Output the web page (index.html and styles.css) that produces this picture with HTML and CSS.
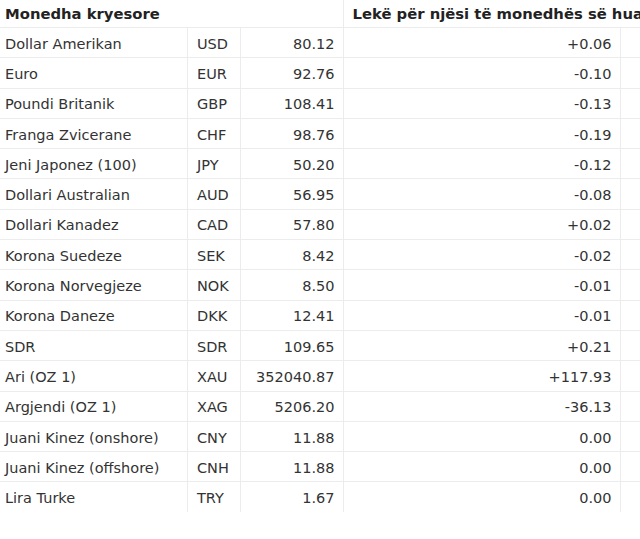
FILE: index.html
```html
<!DOCTYPE html>
<html lang="sq">
<head>
<meta charset="utf-8">
<title>Monedha kryesore</title>
<link rel="stylesheet" href="styles.css">
</head>
<body>
<table class="rates">
  <colgroup>
    <col class="c-name"><col class="c-code"><col class="c-val"><col class="c-chg"><col class="c-extra">
  </colgroup>
  <thead>
    <tr><th colspan="3">Monedha kryesore</th><th colspan="2" class="th-right">Lekë për njësi të monedhës së huaj</th></tr>
  </thead>
  <tbody>
    <tr><td>Dollar Amerikan</td><td>USD</td><td class="num">80.12</td><td class="num">+0.06</td><td></td></tr>
    <tr><td>Euro</td><td>EUR</td><td class="num">92.76</td><td class="num">-0.10</td><td></td></tr>
    <tr><td>Poundi Britanik</td><td>GBP</td><td class="num">108.41</td><td class="num">-0.13</td><td></td></tr>
    <tr><td>Franga Zvicerane</td><td>CHF</td><td class="num">98.76</td><td class="num">-0.19</td><td></td></tr>
    <tr><td>Jeni Japonez (100)</td><td>JPY</td><td class="num">50.20</td><td class="num">-0.12</td><td></td></tr>
    <tr><td>Dollari Australian</td><td>AUD</td><td class="num">56.95</td><td class="num">-0.08</td><td></td></tr>
    <tr><td>Dollari Kanadez</td><td>CAD</td><td class="num">57.80</td><td class="num">+0.02</td><td></td></tr>
    <tr><td>Korona Suedeze</td><td>SEK</td><td class="num">8.42</td><td class="num">-0.02</td><td></td></tr>
    <tr><td>Korona Norvegjeze</td><td>NOK</td><td class="num">8.50</td><td class="num">-0.01</td><td></td></tr>
    <tr><td>Korona Daneze</td><td>DKK</td><td class="num">12.41</td><td class="num">-0.01</td><td></td></tr>
    <tr><td>SDR</td><td>SDR</td><td class="num">109.65</td><td class="num">+0.21</td><td></td></tr>
    <tr><td>Ari (OZ 1)</td><td>XAU</td><td class="num">352040.87</td><td class="num">+117.93</td><td></td></tr>
    <tr><td>Argjendi (OZ 1)</td><td>XAG</td><td class="num">5206.20</td><td class="num">-36.13</td><td></td></tr>
    <tr><td>Juani Kinez (onshore)</td><td>CNY</td><td class="num">11.88</td><td class="num">0.00</td><td></td></tr>
    <tr><td>Juani Kinez (offshore)</td><td>CNH</td><td class="num">11.88</td><td class="num">0.00</td><td></td></tr>
    <tr class="last"><td>Lira Turke</td><td>TRY</td><td class="num">1.67</td><td class="num">0.00</td><td></td></tr>
  </tbody>
</table>
</body>
</html>
```
FILE: styles.css
```css
html, body {
  margin: 0;
  padding: 0;
  overflow: hidden;
  background: #fff;
}
.rates {
  border-collapse: collapse;
  table-layout: fixed;
  width: 744px;
  margin-left: -4px;
  font-family: "DejaVu Sans", Verdana, sans-serif;
  font-size: 14.5px;
  color: #333;
}
.c-name { width: 191.5px; }
.c-code { width: 53.2px; }
.c-val { width: 102.3px; }
.c-chg { width: 277px; }
.c-extra { width: 120px; }
.rates th {
  height: 27px;
  padding: 0 9px;
  text-align: left;
  font-weight: bold;
  font-size: 14.8px;
  color: #222;
  border-bottom: 1px solid #ececec;
  vertical-align: middle;
  white-space: nowrap;
  overflow: hidden;
}
.rates th.th-right {
  border-left: 1px solid #ececec;
}
.rates td {
  height: 27.3px;
  padding: 2px 8px 0 9px;
  border-bottom: 1px solid #ececec;
  border-left: 1px solid #ececec;
  vertical-align: middle;
  white-space: nowrap;
}
.rates td:first-child { border-left: none; }
.rates tr.last td { border-bottom: none; }
.rates td.num { text-align: right; }
```
